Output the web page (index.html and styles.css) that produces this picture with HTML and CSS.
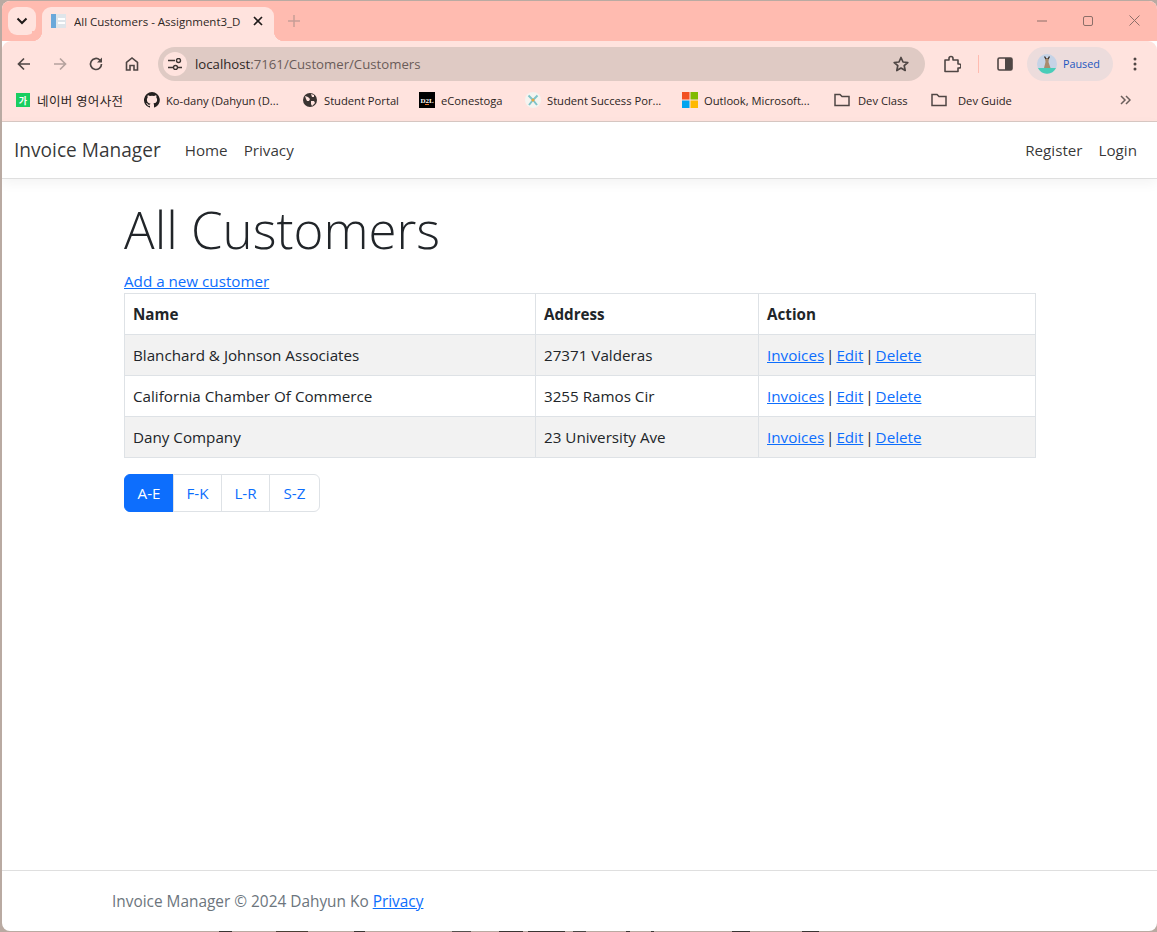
FILE: index.html
```html
<!DOCTYPE html>
<html lang="en">
<head>
  <meta charset="UTF-8" />
  <meta name="viewport" content="width=device-width, initial-scale=1.0"/>
  <title>All Customers - Assignment3_Dahyun</title>
  <link rel="stylesheet" href="styles.css">
</head>
<body>
<div class="window">

  <div class="tabstrip">
    <button class="tab-search">
      <svg width="12" height="8" viewBox="0 0 12 8"><path d="M1.500 1.500 6 6l4.500-4.500" fill="none" stroke="#1f1a19" stroke-width="2"/></svg>
    </button>
    <div class="tab">
      <svg class="tab-icon" width="16" height="16" viewBox="0 0 16 16">
        <rect x="0" y="1" width="5" height="14" fill="#6aa8da"/>
        <rect x="5" y="1" width="10" height="14" fill="#dfe5ea"/>
        <rect x="7" y="5" width="7" height="2" fill="#fff"/>
        <rect x="7" y="9" width="7" height="2" fill="#fff"/>
      </svg>
      <span class="tab-title">All Customers - Assignment3_D</span>
      <svg class="tab-close" width="10" height="10" viewBox="0 0 10 10"><path d="M1 1l8 8M9 1l-8 8" stroke="#1f1a19" stroke-width="1.700"/></svg>
    </div>
    <svg class="new-tab" width="12" height="12" viewBox="0 0 12 12"><path d="M6 0v12M0 6h12" stroke="#c79e96" stroke-width="1.500"/></svg>
    <div class="win-controls">
      <svg width="10" height="10" viewBox="0 0 10 10"><path d="M0 5h10" stroke="#8c6f69"/></svg>
      <svg width="10" height="10" viewBox="0 0 10 10"><rect x=".5" y=".5" width="9" height="9" rx="1.500" fill="none" stroke="#8c6f69"/></svg>
      <svg width="11" height="11" viewBox="0 0 11 11"><path d="M.5.500l10 10M10.500.500l-10 10" stroke="#8c6f69"/></svg>
    </div>
  </div>

  <div class="toolbar">
    <svg class="tool" width="16" height="16" viewBox="0 0 16 16"><path d="M14 8H3M8 2.500 2.500 8 8 13.500" fill="none" stroke="#4f4644" stroke-width="1.700"/></svg>
    <svg class="tool" width="16" height="16" viewBox="0 0 16 16"><path d="M2 8h11M8 2.500 13.500 8 8 13.500" fill="none" stroke="#b5a29e" stroke-width="1.700"/></svg>
    <svg class="tool" width="16" height="16" viewBox="0 0 16 16"><path d="M13.500 8a5.500 5.500 0 1 1-1.700-4L13.500 5.600" fill="none" stroke="#4f4644" stroke-width="1.700"/><path d="M14 1.500v5h-5z" fill="#4f4644"/></svg>
    <svg class="tool tool-home" width="16" height="16" viewBox="0 0 16 16"><path d="M2.500 14V6.500L8 2l5.500 4.500V14H10V9.500H6V14z" fill="none" stroke="#4f4644" stroke-width="1.600"/></svg>
    <div class="omnibox">
      <span class="site-chip">
        <svg width="14" height="12" viewBox="0 0 14 12"><path d="M0 2.500h7M10 9.500h4M0 9.500h5" stroke="#3d3533" stroke-width="1.400"/><circle cx="10.500" cy="2.500" r="2" fill="none" stroke="#3d3533" stroke-width="1.400"/><circle cx="7.500" cy="9.500" r="2" fill="none" stroke="#3d3533" stroke-width="1.400"/></svg>
      </span>
      <span class="url">localhost<span class="url-rest">:7161/Customer/Customers</span></span>
      <svg class="star" width="16" height="16" viewBox="0 0 16 16"><path d="M8 1.500l2 4.500 4.800.5-3.600 3.200 1 4.800L8 12l-4.200 2.500 1-4.800L1.200 6.500 6 6z" fill="none" stroke="#4f4644" stroke-width="1.700" stroke-linejoin="round"/></svg>
    </div>
    <svg class="tool-ext" width="18" height="18" viewBox="0 0 18 18"><path d="M2 5h4V3.500a2 2 0 0 1 4 0V5h5v4h1a2 2 0 0 1 0 4h-1v3.500H2z" fill="none" stroke="#4f4644" stroke-width="1.600" stroke-linejoin="round"/></svg>
    <span class="tool-divider"></span>
    <svg class="tool-panel" width="16" height="14" viewBox="0 0 16 14"><rect x="1" y="1" width="14" height="12" rx="1.500" fill="none" stroke="#4f4644" stroke-width="1.600"/><rect x="8" y="1" width="7" height="12" fill="#4f4644"/></svg>
    <div class="profile">
      <svg class="avatar" width="20" height="20" viewBox="0 0 20 20">
        <circle cx="10" cy="10" r="10" fill="#c5d3e6"/>
        <path d="M1 14h18a10 10 0 0 1-18 0z" fill="#48cdb8"/>
        <path d="M8 4h4l-.5 4 2 6H7l1.500-6z" fill="#a98c6e"/>
        <path d="M7.500 2.500 9 5M12.500 2.500 11 5" stroke="#3b3330" stroke-width="1.400"/>
      </svg>
      <span class="profile-label">Paused</span>
    </div>
    <svg class="kebab" width="4" height="14" viewBox="0 0 4 14"><circle cx="2" cy="2" r="1.500" fill="#4f4644"/><circle cx="2" cy="7" r="1.500" fill="#4f4644"/><circle cx="2" cy="12" r="1.500" fill="#4f4644"/></svg>
  </div>

  <div class="bookmarks">
    <div class="bm">
      <svg width="16" height="16" viewBox="0 0 16 16"><rect x="1" y="1" width="14" height="14" fill="#19ce60"/><text x="8" y="12" class="bm-glyph">가</text></svg>
      <span class="bm-kr">네이버 영어사전</span>
    </div>
    <div class="bm">
      <svg width="16" height="16" viewBox="0 0 16 16"><path fill="#24201f" d="M8 0a8 8 0 0 0-2.500 15.600c.4.100.5-.2.500-.4v-1.400c-2.200.5-2.700-1-2.700-1-.4-.9-.9-1.200-.9-1.200-.7-.5.100-.5.100-.5.800.1 1.200.8 1.200.8.700 1.200 1.900.9 2.300.7.100-.5.300-.9.500-1.100-1.800-.2-3.600-.9-3.600-4 0-.9.300-1.600.8-2.100-.1-.2-.4-1 .1-2.100 0 0 .7-.2 2.200.8a7.600 7.600 0 0 1 4 0c1.500-1 2.200-.8 2.200-.8.400 1.100.2 1.900.1 2.100.5.600.8 1.300.8 2.100 0 3.100-1.900 3.700-3.700 3.900.3.300.6.800.6 1.500v2.200c0 .2.100.5.600.4A8 8 0 0 0 8 0z"/></svg>
      <span>Ko-dany (Dahyun (D...</span>
    </div>
    <div class="bm">
      <svg width="16" height="16" viewBox="0 0 16 16"><circle cx="8" cy="8" r="7" fill="#3a3432"/><path d="M3 4l3 1 2 2-1 2-2 0-1-2zM9 9l3 0 1 2-3 3-1-2zM9 2l3 1 0 2-2 0z" fill="#ffe3de"/></svg>
      <span>Student Portal</span>
    </div>
    <div class="bm">
      <svg width="16" height="16" viewBox="0 0 16 16"><rect width="16" height="16" fill="#000"/><text x="8" y="11" class="bm-d2l">D2L</text><rect x="6" y="12" width="4" height="1" fill="#e8702a"/></svg>
      <span>eConestoga</span>
    </div>
    <div class="bm">
      <svg width="16" height="16" viewBox="0 0 16 16"><circle cx="8" cy="8" r="8" fill="#f4f4f0"/><path d="M3.500 3.500 8 8l4.500-4.500M4 13l4-5 4 5" fill="none" stroke="#7fc4c9" stroke-width="2"/><circle cx="8" cy="8" r="1.500" fill="#eda53c"/></svg>
      <span>Student Success Por...</span>
    </div>
    <div class="bm">
      <svg width="16" height="16" viewBox="0 0 16 16"><rect width="7.500" height="7.500" fill="#f25022"/><rect x="8.500" width="7.500" height="7.500" fill="#7fba00"/><rect y="8.500" width="7.500" height="7.500" fill="#00a4ef"/><rect x="8.500" y="8.500" width="7.500" height="7.500" fill="#ffb900"/></svg>
      <span>Outlook, Microsoft...</span>
    </div>
    <div class="bm bm-folder">
      <svg width="16" height="14" viewBox="0 0 16 14"><path d="M1 12.500V1.500h5l2 2h7v9z" fill="none" stroke="#4f4644" stroke-width="1.500"/></svg>
      <span>Dev Class</span>
    </div>
    <div class="bm bm-folder">
      <svg width="16" height="14" viewBox="0 0 16 14"><path d="M1 12.500V1.500h5l2 2h7v9z" fill="none" stroke="#4f4644" stroke-width="1.500"/></svg>
      <span>Dev Guide</span>
    </div>
    <svg class="bm-more" width="11" height="10" viewBox="0 0 11 10"><path d="M1 1l4 4-4 4M6 1l4 4-4 4" fill="none" stroke="#6a5f5c" stroke-width="1.500"/></svg>
  </div>

  <div class="page">
    <nav class="navbar">
      <a class="brand" href="#">Invoice Manager</a>
      <a class="nav-link" href="#">Home</a>
      <a class="nav-link" href="#">Privacy</a>
      <a class="nav-link nav-register" href="#">Register</a>
      <a class="nav-link" href="#">Login</a>
    </nav>

    <main class="content">
      <h1>All Customers</h1>
      <a class="add-link" href="#">Add a new customer</a>
      <table class="customers">
        <thead>
          <tr><th class="col-name">Name</th><th class="col-address">Address</th><th>Action</th></tr>
        </thead>
        <tbody>
          <tr>
            <td>Blanchard &amp; Johnson Associates</td>
            <td>27371 Valderas</td>
            <td class="actions"><a href="#">Invoices</a> | <a href="#">Edit</a> | <a href="#">Delete</a></td>
          </tr>
          <tr>
            <td>California Chamber Of Commerce</td>
            <td>3255 Ramos Cir</td>
            <td class="actions"><a href="#">Invoices</a> | <a href="#">Edit</a> | <a href="#">Delete</a></td>
          </tr>
          <tr>
            <td>Dany Company</td>
            <td>23 University Ave</td>
            <td class="actions"><a href="#">Invoices</a> | <a href="#">Edit</a> | <a href="#">Delete</a></td>
          </tr>
        </tbody>
      </table>
      <div class="pagination">
        <a class="page-link active" href="#">A-E</a>
        <a class="page-link" href="#">F-K</a>
        <a class="page-link" href="#">L-R</a>
        <a class="page-link" href="#">S-Z</a>
      </div>
    </main>

    <footer>Invoice Manager © 2024 Dahyun Ko <a href="#">Privacy</a></footer>
  </div>

</div>

<!-- tops of whatever sits behind the window, showing under its bottom edge -->
<svg class="behind" width="1157" height="1" viewBox="0 0 1157 1">
  <rect x="219" width="13" height="1" fill="#3a3533"/>
  <rect x="276" width="32" height="1" fill="#4a3f35"/>
  <rect x="354" width="11" height="1" fill="#3a3533"/>
  <rect x="452" width="19" height="1" fill="#55504d"/>
  <rect x="499" width="24" height="1" fill="#3a3533"/>
  <rect x="528" width="37" height="1" fill="#3a3533"/>
  <rect x="573" width="13" height="1" fill="#4a4644"/>
  <rect x="626" width="4" height="1" fill="#3a3533"/>
  <rect x="651" width="3" height="1" fill="#3a3533"/>
  <rect x="732" width="18" height="1" fill="#3a3533"/>
  <rect x="802" width="17" height="1" fill="#3a3533"/>
</svg>
</body>
</html>
```

FILE: styles.css
```css
html, body {
  margin: 0;
  height: 100%;
}

body {
  background: #b9aaa2;
  overflow: hidden;
  font-family: "Open Sans", "Noto Sans", sans-serif;
}

.window {
  height: 930px;
  margin-top: 1px;
  margin-left: 2px;
  display: flex;
  flex-direction: column;
  background: #fff;
  border-radius: 8px;
  overflow: hidden;
}

.behind {
  display: block;
}

/* tab strip */
.tabstrip {
  height: 40px;
  flex: none;
  display: flex;
  align-items: flex-start;
  background: #ffbbb0;
  padding-left: 6px;
  box-sizing: border-box;
}

.tab-search {
  width: 28px;
  height: 28px;
  margin-top: 6px;
  padding: 0;
  border: none;
  border-radius: 9px;
  background: #ffe3de;
  display: flex;
  align-items: center;
  justify-content: center;
}

.tab {
  position: relative;
  width: 232px;
  height: 34px;
  margin-top: 6px;
  margin-left: 6px;
  box-sizing: border-box;
  padding: 0 11px 6px 9px;
  display: flex;
  align-items: center;
  background: #ffe3de;
  border-radius: 9px 9px 0 0;
}

.tab::before,
.tab::after {
  content: "";
  position: absolute;
  bottom: 0;
  width: 10px;
  height: 10px;
}

.tab::before {
  left: -10px;
  background: radial-gradient(circle at 0 0, #ffbbb0 10px, #ffe3de 10.500px);
}

.tab::after {
  right: -10px;
  background: radial-gradient(circle at 100% 0, #ffbbb0 10px, #ffe3de 10.500px);
}

.tab-icon {
  flex: none;
}

.tab-title {
  margin-left: 7px;
  width: 170px;
  overflow: hidden;
  white-space: nowrap;
  font-size: 11.500px;
  color: #2e2725;
}

.tab-close {
  margin-left: auto;
}

.new-tab {
  margin: 14px 0 0 14px;
}

.win-controls {
  margin-left: auto;
  margin-top: 14px;
  padding-right: 17px;
  display: flex;
  align-items: center;
  gap: 36px;
}

/* toolbar */
.toolbar {
  height: 43px;
  flex: none;
  display: flex;
  align-items: center;
  background: #ffe3de;
  border-radius: 9px 9px 0 0;
  padding: 2px 0 0 14px;
  box-sizing: border-box;
}

.tool {
  width: 16px;
  margin-right: 20px;
  flex: none;
}

.tool-home {
  margin-right: 18px;
}

.omnibox {
  width: 767px;
  height: 34px;
  flex: none;
  box-sizing: border-box;
  padding: 0 16px 0 5px;
  display: flex;
  align-items: center;
  background: #dfcac4;
  border-radius: 17px;
}

.site-chip {
  width: 24px;
  height: 24px;
  border-radius: 50%;
  background: #ffe3de;
  display: flex;
  align-items: center;
  justify-content: center;
}

.url {
  margin-left: 8px;
  font-size: 13.200px;
  color: #2e2725;
}

.url-rest {
  color: #6a5c59;
}

.star {
  margin-left: auto;
}

.tool-ext {
  margin-left: 18px;
  flex: none;
}

.tool-divider {
  width: 1px;
  height: 18px;
  margin-left: 17px;
  background: #ffbbb0;
  flex: none;
}

.tool-panel {
  margin-left: 18px;
  flex: none;
}

.profile {
  width: 86px;
  height: 34px;
  margin-left: 14px;
  flex: none;
  box-sizing: border-box;
  padding-left: 10px;
  display: flex;
  align-items: center;
  gap: 6px;
  background: #ecdcdc;
  border-radius: 17px;
}

.profile-label {
  font-size: 10.800px;
  color: #1d57c0;
}

.kebab {
  margin-left: 20px;
  flex: none;
}

.bookmarks {
  height: 38px;
  flex: none;
  box-sizing: border-box;
  padding: 0 0 5px 13px;
  display: grid;
  grid-template-columns: 129px 158px 117px 106px 157px 152px 97px 189px 11px;
  align-items: center;
  background: #ffe3de;
  border-bottom: 1px solid #d9c9c4;
  font-size: 11.200px;
  color: #2b2422;
}

.bm {
  display: flex;
  align-items: center;
  gap: 6px;
  white-space: nowrap;
}

.bm-kr {
  font-family: "Noto Sans CJK KR", sans-serif;
  font-size: 12.500px;
  letter-spacing: 0.400px;
}

.bm-folder {
  gap: 8px;
}

.bm-folder + .bm-folder {
  gap: 11px;
}

.bm-glyph {
  font-family: "Noto Sans CJK KR", sans-serif;
  font-size: 9px;
  font-weight: bold;
  fill: #fff;
  text-anchor: middle;
}

.bm-d2l {
  font-family: "Liberation Serif", serif;
  font-size: 7px;
  font-weight: bold;
  fill: #fff;
  text-anchor: middle;
}

/* the page itself */
.page {
  flex: 1;
  display: flex;
  flex-direction: column;
  font-size: 15.200px;
  color: #212529;
}

a {
  color: #0d6efd;
}

.navbar {
  height: 57px;
  flex: none;
  box-sizing: border-box;
  padding: 0 20px 0 12px;
  display: flex;
  align-items: center;
  background: #fff;
  border-bottom: 1px solid #dfdfdf;
  box-shadow: 0 4px 12px rgba(0, 0, 0, 0.05);
}

.navbar a {
  text-decoration: none;
  color: rgba(0, 0, 0, 0.8);
}

.brand {
  font-size: 19.100px;
  margin-right: 24px;
}

.nav-link + .nav-link {
  margin-left: 16px;
}

.nav-link.nav-register {
  margin-left: auto;
}

.content {
  flex: 1;
  margin-left: 122px;
  width: 912px;
}

h1 {
  margin: 15px 0 0;
  font-size: 51px;
  line-height: 70px;
  font-weight: 300;
}

.add-link {
  display: block;
  margin-top: 7px;
  line-height: 20px;
}

.customers {
  width: 912px;
  margin-top: 2px;
  border-collapse: collapse;
  table-layout: fixed;
}

.customers th,
.customers td {
  height: 41px;
  box-sizing: border-box;
  padding: 0 8px;
  border: 1px solid #dee2e6;
  text-align: left;
  white-space: nowrap;
}

.col-name {
  width: 411px;
}

.col-address {
  width: 223px;
}

.customers th {
  font-weight: 700;
}

.customers tbody tr:nth-child(odd) {
  background: #f2f2f2;
}

.customers .actions {
  word-spacing: -2px;
}

.pagination {
  display: grid;
  grid-template-columns: 50px 48px 48px 50px;
  margin-top: 16px;
  height: 38px;
}

.page-link {
  display: flex;
  align-items: center;
  justify-content: center;
  text-decoration: none;
  border: 1px solid #dee2e6;
  margin-left: -1px;
  background: #fff;
}

.page-link:first-child {
  margin-left: 0;
  border-radius: 6px 0 0 6px;
}

.page-link:last-child {
  border-radius: 0 6px 6px 0;
}

.page-link.active {
  background: #0d6efd;
  border-color: #0d6efd;
  color: #fff;
}

footer {
  height: 61px;
  flex: none;
  box-sizing: border-box;
  padding: 20px 0 0 110px;
  border-top: 1px solid #dfdfdf;
  font-size: 15.400px;
  color: #6c757d;
}
```
